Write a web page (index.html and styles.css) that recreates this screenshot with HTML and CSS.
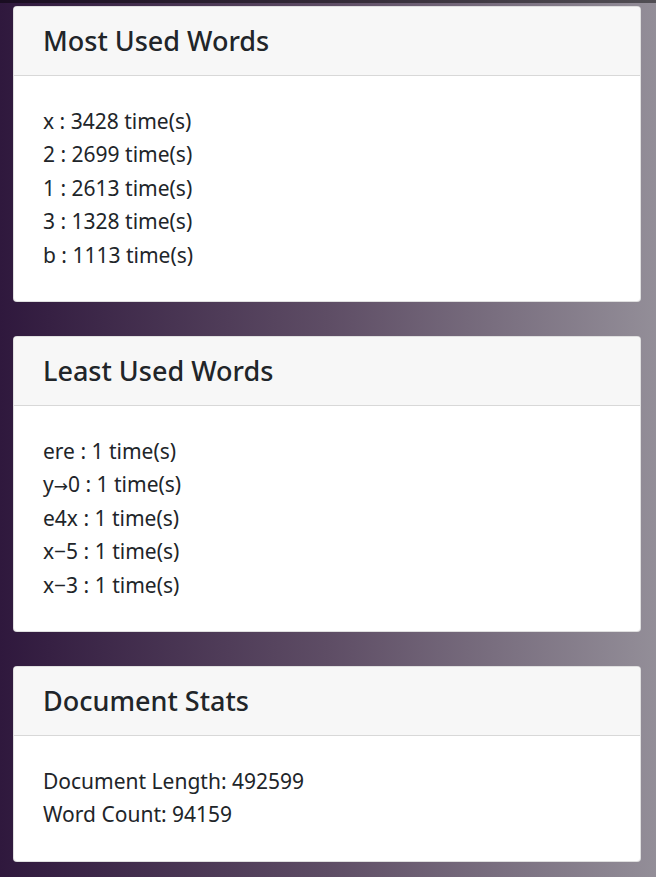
FILE: index.html
```html
<!DOCTYPE html>
<html lang="en">
<head>
<meta charset="utf-8">
<title>Stats</title>
<link rel="stylesheet" href="styles.css">
</head>
<body>
<div class="topbar"></div>
<main class="stack">
  <section class="card">
    <header class="card-header"><h2 class="card-title">Most Used Words</h2></header>
    <div class="card-body">
      <p class="line">x : 3428 time(s)</p>
      <p class="line">2 : 2699 time(s)</p>
      <p class="line">1 : 2613 time(s)</p>
      <p class="line">3 : 1328 time(s)</p>
      <p class="line">b : 1113 time(s)</p>
    </div>
  </section>
  <section class="card">
    <header class="card-header"><h2 class="card-title">Least Used Words</h2></header>
    <div class="card-body">
      <p class="line">ere : 1 time(s)</p>
      <p class="line">y<span class="arrow">→</span>0 : 1 time(s)</p>
      <p class="line">e4x : 1 time(s)</p>
      <p class="line">x−5 : 1 time(s)</p>
      <p class="line">x−3 : 1 time(s)</p>
    </div>
  </section>
  <section class="card">
    <header class="card-header"><h2 class="card-title">Document Stats</h2></header>
    <div class="card-body">
      <p class="line">Document Length: 492599</p>
      <p class="line">Word Count: 94159</p>
    </div>
  </section>
</main>
</body>
</html>
```

FILE: styles.css
```css
* { box-sizing: border-box; }
html, body { margin: 0; padding: 0; }
body {
  min-height: 877px;
  background: linear-gradient(to right, #2f183d 0%, #5e4d65 50%, #938e98 100%);
  font-family: "Noto Sans", "Open Sans", sans-serif;
  color: #212529;
}
.topbar {
  height: 3px;
  background: rgba(0, 0, 0, 0.45);
}
.stack {
  display: flex;
  flex-direction: column;
  gap: 34px;
  padding: 3px 15px 0 13px;
}
.card {
  background: #fff;
  border: 1px solid rgba(0, 0, 0, 0.125);
  border-radius: 4px;
  overflow: hidden;
}
.card-header {
  background: #f7f7f7;
  border-bottom: 1px solid rgba(0, 0, 0, 0.125);
  height: 69px;
  padding: 0 29px;
  display: flex;
  align-items: center;
}
.card-title {
  margin: 0;
  font-size: 27px;
  font-weight: 500;
  line-height: 1.2;
}
.card-body {
  padding: 28.5px 29px 29px;
}
.line {
  margin: 0;
  font-size: 21px;
  line-height: 33.5px;
  height: 33.5px;
}
.arrow {
  font-family: "DejaVu Sans", sans-serif;
  font-size: 17px;
  line-height: 0;
}
```
